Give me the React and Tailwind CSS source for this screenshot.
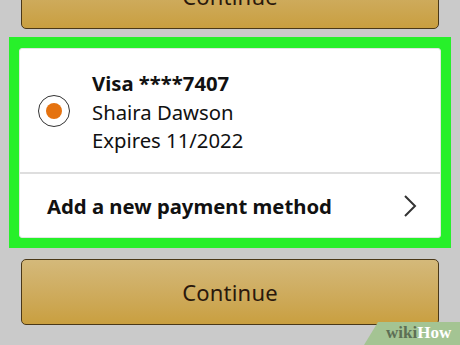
import React from "react";

function Button({ className = "" }) {
  return (
    <div
      className={`mx-[21px] h-[66px] rounded-[5px] border-[1.5px] border-[#4a3818] bg-gradient-to-b from-[#d4b97a] to-[#c99f3f] flex items-center justify-center ${className}`}
    >
      <span className="text-[22px] leading-[28px] text-[#2a180c] tracking-[0.2px]">Continue</span>
    </div>
  );
}

export default function App() {
  return (
    <div
      className="relative w-[460px] h-[345px] overflow-hidden bg-[#cacaca] flex flex-col"
      style={{ fontFamily: '"Noto Sans", "Open Sans", sans-serif' }}
    >
      <Button className="-mt-[37px] shrink-0" />

      <div className="mx-[9px] mt-[8px] shrink-0 bg-[#27f02a] p-[10px] pt-[11px]">
        <div className="rounded-[3px] bg-white border border-[#e4e4e4]">
          <div className="flex items-center h-[125px] pl-[18px] border-b-2 border-[#dedede]">
            <div className="w-[32px] h-[32px] rounded-full border-[1.5px] border-[#333] bg-white flex items-center justify-center shrink-0">
              <div className="w-[16px] h-[16px] rounded-full bg-[#e5720f]" />
            </div>
            <div className="ml-[22px] mt-[3px] flex flex-col text-[20.3px] leading-[28.5px] text-[#111]">
              <span className="font-bold">Visa ****7407</span>
              <span>Shaira Dawson</span>
              <span>Expires 11/2022</span>
            </div>
          </div>
          <div className="flex items-center justify-between h-[63px] pl-[27px] pr-[23px]">
            <span className="text-[20.3px] leading-[28px] font-bold text-[#111]">
              Add a new payment method
            </span>
            <svg width="14" height="22" viewBox="0 0 14 22" className="shrink-0">
              <polyline
                points="2,1 12,11 2,21"
                fill="none"
                stroke="#333"
                strokeWidth="2"
              />
            </svg>
          </div>
        </div>
      </div>

      <Button className="mt-[11px] shrink-0" />

      <div className="absolute right-0 bottom-0 w-[96px] h-[23px]">
        <svg width="96" height="23" viewBox="0 0 96 23" className="absolute inset-0">
          <polygon points="14,0 96,0 96,23 0,23" fill="#a4c493" />
        </svg>
        <div
          className="absolute left-[22px] bottom-[2px] text-[17px] leading-[20px] font-bold whitespace-nowrap"
          style={{ fontFamily: '"Liberation Serif", "DejaVu Serif", serif' }}
        >
          <span className="text-[#5d6f55]">wiki</span>
          <span className="text-white">How</span>
        </div>
      </div>
    </div>
  );
}
